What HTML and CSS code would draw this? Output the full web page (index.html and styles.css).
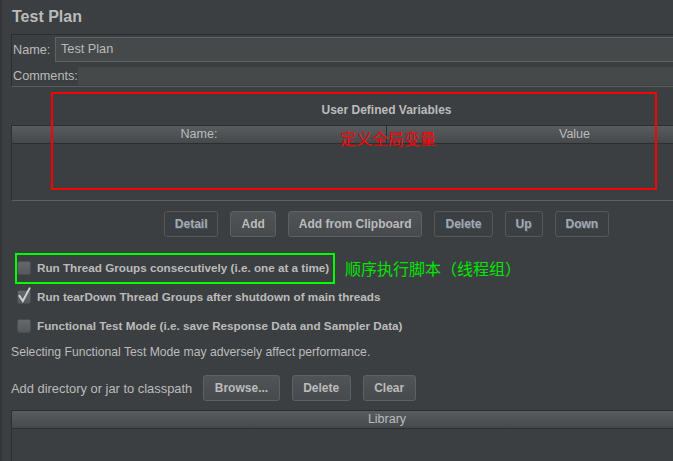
FILE: index.html
```html
<!DOCTYPE html>
<html>
<head>
<meta charset="utf-8">
<link rel="stylesheet" href="styles.css">
</head>
<body>
<div class="page">
  <h1 class="title">Test Plan</h1>
  <div class="name-panel">
    <div class="field-row">
      <span class="lbl name-lbl">Name:</span>
      <div class="input">Test Plan</div>
    </div>
    <div class="field-row comments">
      <span class="lbl comments-lbl">Comments:</span>
      <div class="textarea"></div>
    </div>
  </div>

  <div class="section-title">User Defined Variables</div>
  <div class="table vars">
    <div class="thead">
      <div class="th col-name">Name:</div>
      <div class="th col-value">Value</div>
    </div>
    <div class="tbody"></div>
  </div>

  <div class="btn-row">
    <button class="btn disabled">Detail</button>
    <button class="btn">Add</button>
    <button class="btn">Add from Clipboard</button>
    <button class="btn disabled">Delete</button>
    <button class="btn disabled">Up</button>
    <button class="btn disabled">Down</button>
  </div>

  <div class="checks">
    <div class="check-row"><span class="cb"></span><span class="check-label">Run Thread Groups consecutively (i.e. one at a time)</span></div>
    <div class="check-row"><span class="cb checked"><svg class="tick" width="14" height="17" viewBox="0 0 14 17"><path d="M2.5 9 L5.8 14 L12.5 1.5" fill="none" stroke="#cfd1d3" stroke-width="2" stroke-linecap="square" stroke-linejoin="miter"/></svg></span><span class="check-label">Run tearDown Thread Groups after shutdown of main threads</span></div>
    <div class="check-row"><span class="cb"></span><span class="check-label">Functional Test Mode (i.e. save Response Data and Sampler Data)</span></div>
  </div>

  <p class="note">Selecting Functional Test Mode may adversely affect performance.</p>

  <div class="cp-row">
    <span class="cp-label">Add directory or jar to classpath</span>
    <button class="btn">Browse...</button>
    <button class="btn">Delete</button>
    <button class="btn">Clear</button>
  </div>

  <div class="table lib">
    <div class="thead">
      <div class="th col-lib">Library</div>
    </div>
    <div class="tbody"></div>
  </div>
</div>

<div class="anno red-box"></div>
<div class="anno red-text">定义全局变量</div>
<div class="anno green-box"></div>
<div class="anno green-text">顺序执行脚本（线程组）</div>
</body>
</html>
```

FILE: styles.css
```css
html, body {
  margin: 0;
  padding: 0;
  background: #3c3f41;
  overflow: hidden;
  height: 461px;
}

body {
  font-family: "Liberation Sans", Arial, sans-serif;
  font-size: 12px;
  color: #bbbbbb;
  position: relative;
}

.page {
  width: 751px;
  padding-left: 9px;
  border-left: 2px solid #333638;
}

.title {
  margin: 0;
  font-size: 16px;
  font-weight: bold;
  line-height: 18px;
  padding: 8px 0 8px 1px;
  color: #bbbbbb;
}

.name-panel {
  border-top: 1px solid #2c2e30;
  border-left: 1px solid #2c2e30;
  border-bottom: 1px solid #5b5e60;
  padding: 2px 0 1px 0;
  font-size: 12.7px;
}

.field-row {
  display: flex;
  align-items: center;
}

.lbl {
  flex: none;
  padding-left: 1px;
  box-sizing: border-box;
}

.name-lbl { width: 43px; }
.comments-lbl { width: 66px; }

.input {
  flex: 1;
  height: 25px;
  box-sizing: border-box;
  background: #45494a;
  border: 1px solid #5e6264;
  border-right: none;
  padding-left: 5px;
  line-height: 23px;
}

.comments {
  margin-top: 5px;
}

.textarea {
  flex: 1;
  height: 18px;
  background: #45494a;
}

.section-title {
  margin-top: 15px;
  margin-bottom: 7px;
  line-height: 16px;
  text-align: center;
  font-weight: bold;
}

.table {
  border-top: 1px solid #2c2e30;
  border-left: 1px solid #2c2e30;
}

.vars {
  border-bottom: 1px solid #5e6163;
}

.thead {
  display: flex;
  height: 17px;
  background: linear-gradient(#585c5f, #46494b);
  border-bottom: 1px solid #2c2e30;
  font-size: 12.5px;
}

.th {
  line-height: 17px;
  text-align: center;
}

.col-name {
  width: 374px;
  border-right: 1px solid #2c2e30;
}

.col-value { flex: 1; }
.col-lib { flex: 1; }

.vars .tbody {
  height: 56px;
}

.lib .tbody {
  height: 100px;
}

.btn-row {
  display: flex;
  justify-content: center;
  gap: 12px;
  margin-top: 10px;
}

.btn {
  height: 26px;
  padding: 0 10px;
  font-family: "Liberation Sans", Arial, sans-serif;
  font-size: 12px;
  font-weight: bold;
  color: #bbbbbb;
  background: linear-gradient(#505457, #474a4c);
  border: 1px solid #5e6163;
  border-radius: 3px;
  margin: 0;
}

.btn.disabled {
  background: #3c3f41;
  border-color: #55585a;
  color: #a3aab2;
  text-shadow: 1px 1px 0 #4c5966;
}

.checks {
  margin-top: 16px;
}

.check-row {
  display: flex;
  align-items: center;
  height: 29px;
  padding-left: 6px;
}

.cb {
  position: relative;
  flex: none;
  width: 14px;
  height: 14px;
  box-sizing: border-box;
  background: linear-gradient(#64686a, #56595b);
  border: 1px solid #4a4d4f;
  border-radius: 2px;
}

.tick {
  position: absolute;
  left: -1px;
  top: -4px;
  overflow: visible;
}

.check-label {
  margin-left: 6px;
  font-weight: bold;
  font-size: 11.7px;
}

.note {
  margin: 4px 0 0 0;
  line-height: 16px;
  font-size: 12.2px;
}

.cp-row {
  display: flex;
  align-items: center;
  margin-top: 15px;
  gap: 12px;
}

.cp-row .btn {
  padding: 0 10.5px;
}

.cp-label {
  margin-right: -1px;
  font-size: 12.9px;
}

.lib {
  margin-top: 9px;
}

.anno {
  position: absolute;
}

.red-box {
  left: 51px;
  top: 92px;
  width: 606px;
  height: 98px;
  box-sizing: border-box;
  border: 2px solid #ff0000;
}

.red-text {
  left: 340px;
  top: 128px;
  font-family: "Noto Sans CJK SC", sans-serif;
  font-size: 16px;
  line-height: 20px;
  color: #ff0000;
}

.green-box {
  left: 15px;
  top: 253px;
  width: 320px;
  height: 31px;
  box-sizing: border-box;
  border: 2px solid #00ff00;
}

.green-text {
  left: 345px;
  top: 258px;
  font-family: "Noto Sans CJK SC", sans-serif;
  font-size: 16px;
  line-height: 20px;
  color: #00e600;
}
```
